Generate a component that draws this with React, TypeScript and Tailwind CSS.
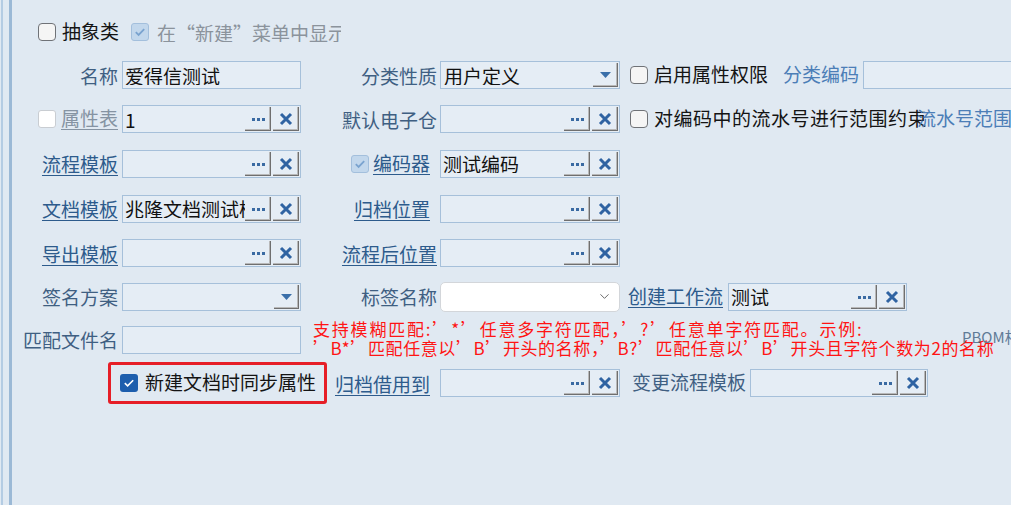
import { ChevronDown } from 'lucide-react';

type BoxKind = 'off' | 'dis' | 'disOn' | 'on';

function Box({ kind }: { kind: BoxKind }) {
  if (kind === 'on') {
    return (
      <span className="w-[18px] h-[18px] shrink-0 rounded-[3px] bg-[#1d5ead] flex items-center justify-center">
        <svg width="12" height="10" viewBox="0 0 12 10">
          <path d="M1.8 5.2 L4.6 7.9 L10.2 2.2" fill="none" stroke="#fff" strokeWidth="1.6" />
        </svg>
      </span>
    );
  }
  if (kind === 'disOn') {
    return (
      <span className="w-[18px] h-[18px] shrink-0 rounded-[3px] border border-[#a3bfdc] bg-[#c2d7ec] flex items-center justify-center">
        <svg width="12" height="10" viewBox="0 0 12 10">
          <path d="M1.8 5.2 L4.6 7.9 L10.2 2.2" fill="none" stroke="#7aa3cf" strokeWidth="1.8" />
        </svg>
      </span>
    );
  }
  if (kind === 'dis') {
    return <span className="block w-[18px] h-[18px] shrink-0 rounded-[3px] border border-[#c9cdd2] bg-white" />;
  }
  return <span className="block w-[18px] h-[18px] shrink-0 rounded-[4px] border-[1.5px] border-[#6f7277] bg-[#f5f5f5]" />;
}

function Bevel({ children, w = 'w-[26px]' }: { children: React.ReactNode; w?: string }) {
  return (
    <div
      className={`${w} self-stretch my-[1px] flex items-center justify-center shadow-[inset_-1px_-1px_0_#6f6f6f,inset_-2px_-2px_0_#b8b8b8]`}
    >
      {children}
    </div>
  );
}

function Dots() {
  return (
    <div className="flex gap-[2px] mt-[1px]">
      <span className="w-[3px] h-[3px] bg-[#3a6aa2]" />
      <span className="w-[3px] h-[3px] bg-[#3a6aa2]" />
      <span className="w-[3px] h-[3px] bg-[#3a6aa2]" />
    </div>
  );
}

function Cross() {
  return (
    <svg width="14" height="14" viewBox="0 0 14 14">
      <path d="M2 2 L12 12 M12 2 L2 12" stroke="#2f63a2" strokeWidth="3" fill="none" />
    </svg>
  );
}

function Field({ value = '', w = 'w-[179px]', btns = true }: { value?: string; w?: string; btns?: boolean }) {
  return (
    <div className={`${w} h-[28px] shrink-0 border border-[#a6c0da] bg-[#e5edf5] flex items-center`}>
      <span className="flex-1 min-w-0 overflow-hidden whitespace-nowrap pl-[2px] text-[19px] leading-none text-[#111]">
        {value}
      </span>
      {btns && (
        <>
          <Bevel>
            <Dots />
          </Bevel>
          <div className="w-[2px]" />
          <Bevel>
            <Cross />
          </Bevel>
          <div className="w-[1px]" />
        </>
      )}
    </div>
  );
}

function Select({ value = '', w = 'w-[179px]' }: { value?: string; w?: string }) {
  return (
    <div className={`${w} h-[28px] shrink-0 border border-[#a6c0da] bg-[#e5edf5] flex items-center`}>
      <span className="flex-1 min-w-0 overflow-hidden whitespace-nowrap pl-[3px] text-[19px] leading-none text-[#111]">
        {value}
      </span>
      <Bevel w="w-[25px]">
        <svg width="11" height="6" viewBox="0 0 11 6">
          <path d="M0 0 L11 0 L5.5 6 Z" fill="#3a6fa9" />
        </svg>
      </Bevel>
      <div className="w-[1px]" />
    </div>
  );
}

function Label({ children, kind = 'plain', pr = '' }: { children: React.ReactNode; kind?: 'plain' | 'link' | 'dead' | 'bright' | 'black'; pr?: string }) {
  const c =
    kind === 'link'
      ? 'text-[#2d5b8c] underline underline-offset-[3px] decoration-[1px]'
      : kind === 'dead'
        ? 'text-[#8593a2] underline underline-offset-[3px] decoration-[1px]'
        : kind === 'bright'
          ? 'text-[#4c7eb7]'
          : kind === 'black'
            ? 'text-[#141414]'
            : 'text-[#3f5f82]';
  return <span className={`text-[19px] leading-none whitespace-nowrap ${c} ${pr}`}>{children}</span>;
}

function CellA({ children }: { children: React.ReactNode }) {
  return <div className="w-[106px] shrink-0 flex items-center justify-end mr-[4px]">{children}</div>;
}

function CellB({ children, w = 'w-[136px]' }: { children: React.ReactNode; w?: string }) {
  return <div className={`${w} shrink-0 flex items-center justify-end mr-[3px]`}>{children}</div>;
}

export default function App() {
  return (
    <div className="w-[1011px] h-[505px] overflow-hidden bg-[#e0e9f2] flex font-['Noto_Sans_CJK_SC','Noto_Sans',sans-serif]">
      <div className="w-[1px] shrink-0" />
      <div className="w-[2px] shrink-0 bg-[#b4cce3]" />
      <div className="w-[6px] shrink-0" />
      <div className="w-[3px] shrink-0 bg-[#9bb9d6]" />

      <div className="flex-1 flex flex-col pt-[11px] min-w-0">
        {/* row 1 */}
        <div className="h-[42px] flex items-center">
          <div className="ml-[26px]">
            <Box kind="off" />
          </div>
          <span className="ml-[6px]">
            <Label kind="black">抽象类</Label>
          </span>
          <div className="ml-[12px] w-[210px] overflow-hidden flex items-center">
            <Box kind="disOn" />
            <span className="ml-[8px] text-[19px] leading-none whitespace-nowrap text-[#8b939c]">在“新建”菜单中显示</span>
          </div>
        </div>

        {/* row 2 */}
        <div className="h-[44px] flex items-center">
          <CellA>
            <Label>名称</Label>
          </CellA>
          <Field value="爱得信测试" btns={false} />
          <CellB>
            <Label>分类性质</Label>
          </CellB>
          <Select value="用户定义" w="w-[180px]" />
          <div className="ml-[10px]">
            <Box kind="off" />
          </div>
          <span className="ml-[6px]">
            <Label kind="black">启用属性权限</Label>
          </span>
          <span className="ml-[15px]">
            <Label kind="bright">分类编码</Label>
          </span>
          <div className="ml-[4px]">
            <Field w="w-[200px]" btns={false} />
          </div>
        </div>

        {/* row 3 */}
        <div className="h-[44px] flex items-center">
          <CellA>
            <Box kind="dis" />
            <span className="ml-[5px]">
              <Label kind="dead">属性表</Label>
            </span>
          </CellA>
          <Field value="1" />
          <CellB>
            <Label>默认电子仓</Label>
          </CellB>
          <Field w="w-[180px]" />
          <div className="ml-[10px]">
            <Box kind="off" />
          </div>
          <span className="ml-[6px]">
            <Label kind="black" pr="tracking-[0.5px]">对编码中的流水号进行范围约束</Label>
          </span>
          <span className="-ml-[10px]">
            <Label kind="bright">流水号范围</Label>
          </span>
        </div>

        {/* row 4 */}
        <div className="h-[45px] flex items-center">
          <CellA>
            <Label kind="link">流程模板</Label>
          </CellA>
          <Field />
          <CellB>
            <Box kind="disOn" />
            <span className="ml-[4px]">
              <Label kind="link" pr="mr-[7px]">编码器</Label>
            </span>
          </CellB>
          <Field value="测试编码" w="w-[180px]" />
        </div>

        {/* row 5 */}
        <div className="h-[45px] flex items-center">
          <CellA>
            <Label kind="link">文档模板</Label>
          </CellA>
          <Field value="兆隆文档测试模板" />
          <CellB>
            <Label kind="link" pr="mr-[7px]">归档位置</Label>
          </CellB>
          <Field w="w-[180px]" />
        </div>

        {/* row 6 */}
        <div className="h-[44px] flex items-center">
          <CellA>
            <Label kind="link">导出模板</Label>
          </CellA>
          <Field />
          <CellB>
            <Label kind="link">流程后位置</Label>
          </CellB>
          <Field w="w-[180px]" />
        </div>

        {/* row 7 */}
        <div className="h-[43px] flex items-center">
          <CellA>
            <Label>签名方案</Label>
          </CellA>
          <Select />
          <CellB>
            <Label>标签名称</Label>
          </CellB>
          <div className="w-[180px] h-[30px] shrink-0 rounded-[5px] border border-[#d3d6da] bg-white flex items-center justify-end pr-[7px]">
            <ChevronDown size={15} strokeWidth={1.6} className="text-[#6b6b6b]" />
          </div>
          <span className="ml-[8px]">
            <Label kind="link">创建工作流</Label>
          </span>
          <div className="ml-[5px]">
            <Field value="测试" />
          </div>
        </div>

        {/* row 8 */}
        <div className="h-[43px] flex items-center">
          <CellA>
            <Label>匹配文件名</Label>
          </CellA>
          <Field btns={false} />
          <div className="ml-[12px] w-[649px] shrink-0 mb-[4px] whitespace-nowrap text-[17px] leading-[19px] text-[#ff1414]">
            <div className="tracking-[1.8px]">支持模糊匹配:’*’任意多字符匹配，’?’任意单字符匹配。示例:</div>
            <div className="tracking-[0.6px]">’B*’匹配任意以’B’开头的名称，’B?’匹配任意以’B’开头且字符个数为2的名称</div>
          </div>
          <span className="text-[15px] leading-none whitespace-nowrap text-[#5f7b97] mb-[6px]">PBOM相关</span>
        </div>

        {/* row 9 */}
        <div className="h-[44px] flex items-center">
          <div className="ml-[96px] w-[219px] h-[42px] shrink-0 border-[3px] border-[#e61e27] rounded-[3px] flex items-center pl-[9px]">
            <Box kind="on" />
            <span className="ml-[7px]">
              <Label kind="black">新建文档时同步属性</Label>
            </span>
          </div>
          <CellB w="w-[110px]">
            <Label kind="link" pr="mr-[7px]">归档借用到</Label>
          </CellB>
          <Field w="w-[180px]" />
          <span className="ml-[12px] mr-[4px]">
            <Label>变更流程模板</Label>
          </span>
          <Field w="w-[178px]" />
        </div>
      </div>
    </div>
  );
}
